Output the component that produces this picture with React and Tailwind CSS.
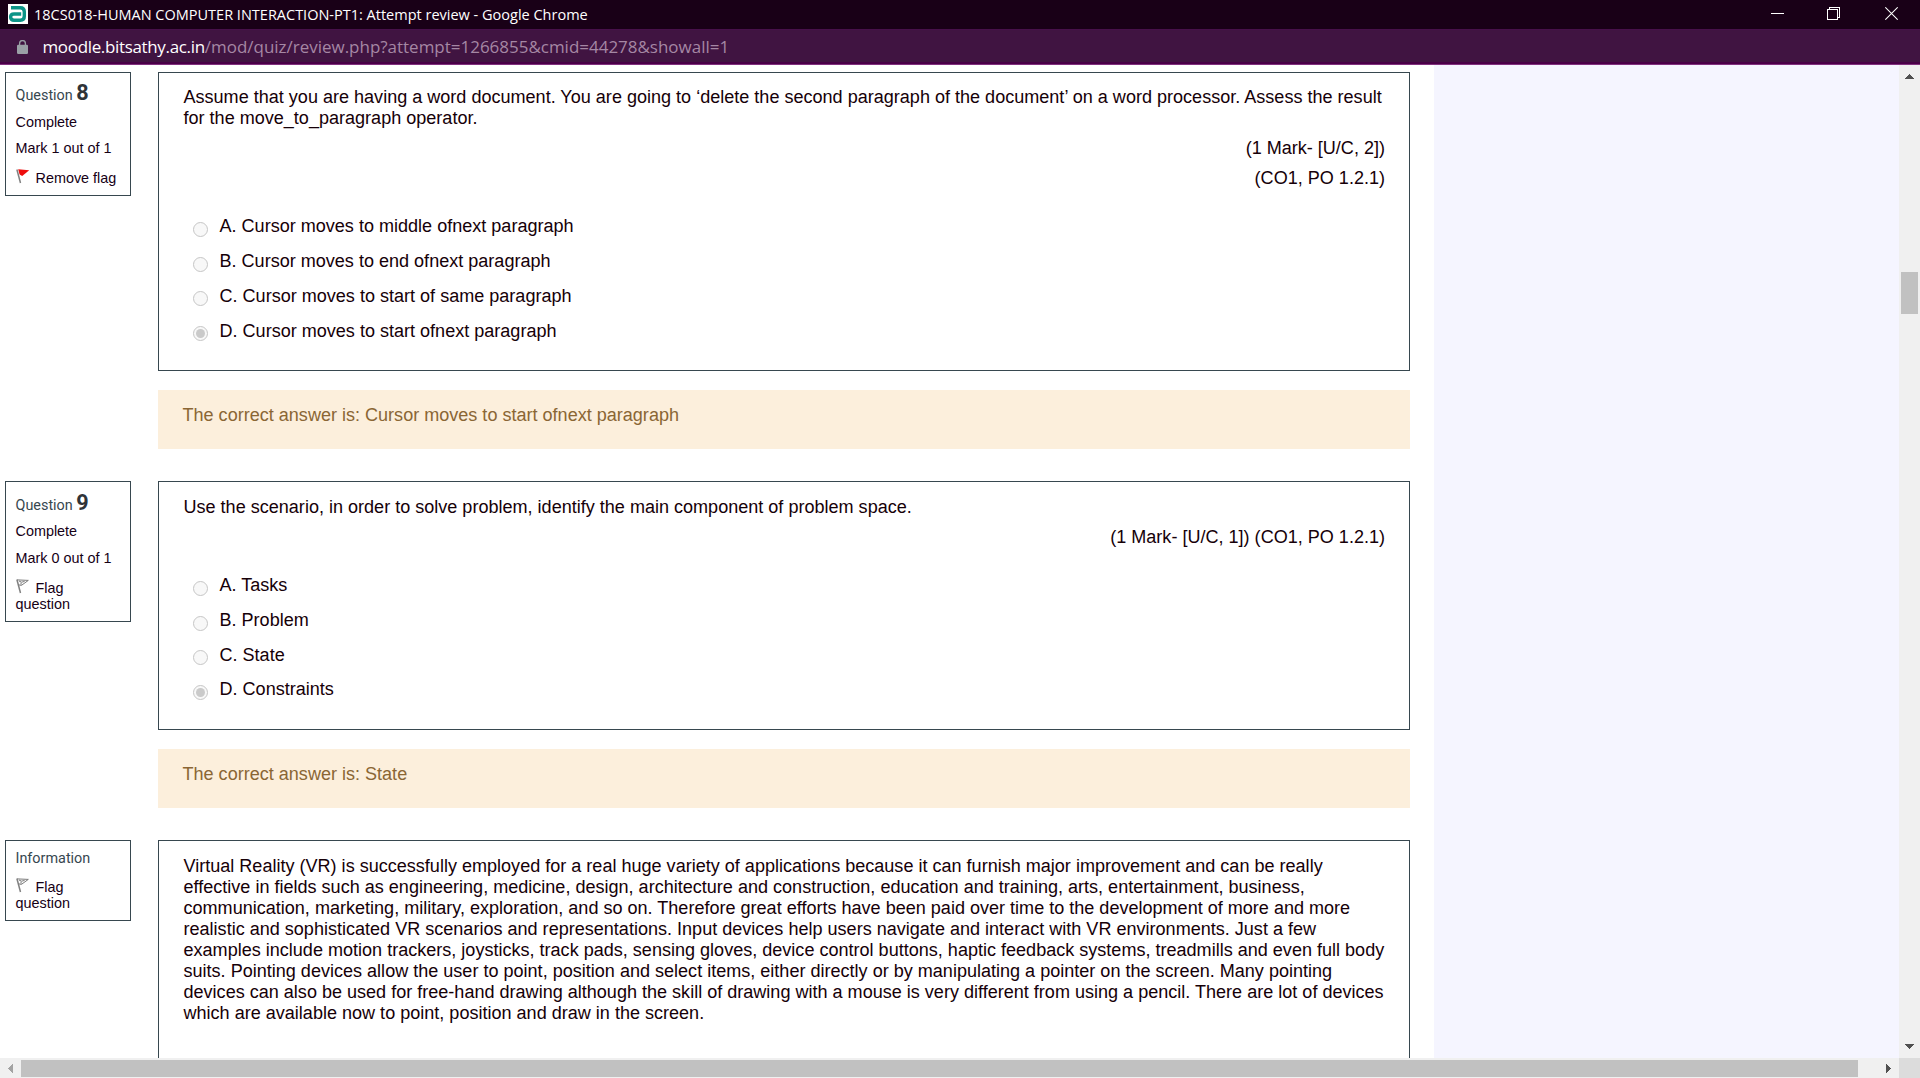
import React from "react";

function Titlebar() {
  return (
    <div className="flex h-[29px] items-center bg-[#190017] pl-2 text-white">
      <svg width="20" height="20" viewBox="0 0 20 20" className="mt-[-1px] shrink-0">
        <rect width="20" height="20" fill="#fff" />
        <path
          d="M3 3.8H12.2Q16.3 3.8 16.3 7.8V12.2Q16.3 16.2 12.3 16.2H6Q2.6 16.2 2.6 13.1Q2.6 10 6 10H13.2"
          fill="none"
          stroke="#0c9488"
          strokeWidth="3.4"
        />
      </svg>
      <span className="ml-[6px] whitespace-pre font-['Open_Sans','Noto_Sans',sans-serif] text-[14.5px] leading-5">
        18CS018-HUMAN COMPUTER INTERACTION-PT1: Attempt review - Google Chrome
      </span>
      <div className="ml-auto flex h-full pr-[22px]">
        <svg width="13" height="29" viewBox="0 0 13 29" shapeRendering="crispEdges">
          <path d="M0 13.5H13" stroke="#fff" />
        </svg>
        <svg width="13" height="29" viewBox="0 0 13 29" className="ml-[43px]" fill="none" stroke="#fff" shapeRendering="crispEdges">
          <path d="M.5 9.5H10.5V19.5H.5ZM2.5 9V7.5H12.5V17.5H11" />
        </svg>
        <svg width="13" height="29" viewBox="0 0 13 29" className="ml-[45px]">
          <path d="M.3 7.3L12.7 19.7M12.7 7.3L.3 19.7" stroke="#fff" strokeWidth="1.2" />
        </svg>
      </div>
    </div>
  );
}

function AddressBar() {
  return (
    <div className="flex h-9 items-center border-b border-[#81307e] bg-[#401441] pl-[17px] shadow-[inset_0_1px_0_#47104a,inset_0_-2px_0_#490047]">
      <svg width="11" height="14" viewBox="0 0 11 14" className="shrink-0">
        <path d="M2.6 6V3.5A2.9 2.9 0 0 1 8.4 3.5V6" fill="none" stroke="#9aa0a6" strokeWidth="1.3" />
        <rect y="4.8" width="11" height="9.2" rx="1.2" fill="#9aa0a6" />
      </svg>
      <div className="ml-[14.5px] whitespace-pre font-['Open_Sans','Noto_Sans',sans-serif] leading-6">
        <span className="text-[16.97px] tracking-[-0.32px] text-white">moodle.bitsathy.ac.in</span>
        <span className="text-[16.98px] text-[#a587a4]">/mod/quiz/review.php?attempt=1266855&amp;cmid=44278&amp;showall=1</span>
      </div>
    </div>
  );
}

function Flag({ red }) {
  return (
    <svg width="14" height="15" viewBox="0 0 14 15" className="absolute top-[-1px] left-0">
      <path d="M.9 .5L4.5 14" stroke="#808080" strokeWidth="1.5" fill="none" />
      {red ? (
        <path d="M2.2 .2L13.2 1.2L6.2 7L3.6 5.4Z" fill="#ee0d0d" />
      ) : (
        <path d="M1.2 .9L12.3 1.4L5.4 6.4L2.6 5.8M3 2L5.6 3.2L8.6 2.4M5 3.6L5.1 5.8" fill="none" stroke="#7a7a7a" strokeWidth="1" />
      )}
    </svg>
  );
}

function InfoBox({ className, children }) {
  return (
    <div className={"w-[126px] shrink-0 self-start border border-[#37474f] pl-[9.5px] text-[14.4px] leading-4 text-[#160016] " + className}>
      {children}
    </div>
  );
}

function QuestionTitle({ number, className }) {
  return (
    <div className={"font-['Roboto',sans-serif] leading-[22px] text-[#37474f] " + className}>
      Question <b className="text-[21.6px] font-bold leading-[20px] text-[#2f3338]">{number}</b>
    </div>
  );
}

function FlagLink({ red, children }) {
  return (
    <div className="relative">
      <Flag red={red} />
      <span className="inline-block pl-5">{children}</span>
    </div>
  );
}

function Option({ text, checked, raised }) {
  return (
    <div className="flex h-[35px] items-start">
      <span
        className={
          "flex size-[15px] shrink-0 items-center justify-center rounded-full border border-[#c6c6c6] bg-[#f8f8f8] " +
          (raised ? "mt-[5px]" : "mt-[6px]")
        }
      >
        {checked && <span className="size-[9px] rounded-full bg-[#cacaca]" />}
      </span>
      <span className="ml-[11.5px]">{text}</span>
    </div>
  );
}

function Feedback({ children }) {
  return <div className="mt-[19px] h-[59px] bg-[#fcefdc] pt-[15px] pl-[24.5px] text-[#8a6634]">{children}</div>;
}

const virtualReality = [
  "Virtual Reality (VR) is successfully employed for a real huge variety of applications because it can furnish major improvement and can be really",
  "effective in fields such as engineering, medicine, design, architecture and construction, education and training, arts, entertainment, business,",
  "communication, marketing, military, exploration, and so on. Therefore great efforts have been paid over time to the development of more and more",
  "realistic and sophisticated VR scenarios and representations. Input devices help users navigate and interact with VR environments. Just a few",
  "examples include motion trackers, joysticks, track pads, sensing gloves, device control buttons, haptic feedback systems, treadmills and even full body",
  "suits. Pointing devices allow the user to point, position and select items, either directly or by manipulating a pointer on the screen. Many pointing",
  "devices can also be used for free-hand drawing although the skill of drawing with a mouse is very different from using a pencil. There are lot of devices",
  "which are available now to point, position and draw in the screen.",
];

function Content() {
  return (
    <main className="flex h-full w-[1434px] shrink-0 flex-col overflow-hidden bg-white pt-[7px] pl-[5px]">
      <section className="flex h-[409px] shrink-0">
        <InfoBox className="h-[124px] pt-[10px]">
          <QuestionTitle number="8" className="h-[31px]" />
          <div className="h-[26px]">Complete</div>
          <div className="h-[30px]">Mark 1 out of 1</div>
          <FlagLink red>Remove flag</FlagLink>
        </InfoBox>
        <div className="ml-[27px] w-[1252px]">
          <div className="h-[299px] border border-[#37474f] px-6 pt-[14px]">
            <p className="whitespace-pre pl-[0.5px]">
              Assume that you are having a word document. You are going to ‘delete the second paragraph of the document’ on a word processor. Assess the result
              <br />
              for the move_to_paragraph operator.
            </p>
            <p className="mt-[9px] text-right">(1 Mark- [U/C, 2])</p>
            <p className="mt-[9px] text-right">(CO1, PO 1.2.1)</p>
            <div className="mt-[27px] pl-[10px]">
              <Option text="A. Cursor moves to middle ofnext paragraph" />
              <Option text="B. Cursor moves to end ofnext paragraph" />
              <Option text="C. Cursor moves to start of same paragraph" raised />
              <Option text="D. Cursor moves to start ofnext paragraph" checked raised />
            </div>
          </div>
          <Feedback>The correct answer is: Cursor moves to start ofnext paragraph</Feedback>
        </div>
      </section>

      <section className="flex h-[359px] shrink-0">
        <InfoBox className="h-[141px] pt-[11px]">
          <QuestionTitle number="9" className="h-[30px]" />
          <div className="h-[27px]">Complete</div>
          <div className="h-[30px]">Mark 0 out of 1</div>
          <FlagLink>Flag</FlagLink>
          <div>question</div>
        </InfoBox>
        <div className="ml-[27px] w-[1252px]">
          <div className="h-[249px] border border-[#37474f] px-6 pt-[15px]">
            <p className="pl-[0.5px]">Use the scenario, in order to solve problem, identify the main component of problem space.</p>
            <p className="mt-[9px] text-right">(1 Mark- [U/C, 1]) (CO1, PO 1.2.1)</p>
            <div className="mt-[27px] pl-[10px]">
              <Option text="A. Tasks" />
              <Option text="B. Problem" />
              <Option text="C. State" raised />
              <div className="mt-[-1px]">
                <Option text="D. Constraints" checked />
              </div>
            </div>
          </div>
          <Feedback>The correct answer is: State</Feedback>
        </div>
      </section>

      <section className="flex h-[240px] shrink-0">
        <InfoBox className="h-[81px] pt-[10px]">
          <div className="h-[28px] font-['Roboto',sans-serif] text-[#37474f]">Information</div>
          <FlagLink>Flag</FlagLink>
          <div>question</div>
        </InfoBox>
        <div className="ml-[27px] w-[1252px] whitespace-pre border border-[#37474f] px-6 pt-[15px]">
          {virtualReality.map((line) => (
            <p key={line} className="pl-[0.5px]">{line}</p>
          ))}
        </div>
      </section>
    </main>
  );
}

function VerticalScrollbar() {
  return (
    <div className="flex w-[21px] shrink-0 flex-col items-center bg-[#f0f0f0]">
      <svg width="9" height="5" viewBox="0 0 9 5" className="mt-[9px]" shapeRendering="crispEdges">
        <path d="M0 5L4.5 0L9 5Z" fill="#505050" />
      </svg>
      <div className="mt-[193px] h-[42px] w-[17px] bg-[#c1c1c1]" />
      <svg width="9" height="5" viewBox="0 0 9 5" className="mt-auto mb-[9px]" shapeRendering="crispEdges">
        <path d="M0 0L4.5 5L9 0Z" fill="#505050" />
      </svg>
    </div>
  );
}

function HorizontalScrollbar() {
  return (
    <div className="flex h-5 shrink-0 bg-[#f0f0f0]">
      <svg width="21" height="20" viewBox="0 0 21 20" shapeRendering="crispEdges">
        <path d="M13 6L8 10.5L13 15Z" fill="#a3a3a3" />
      </svg>
      <div className="mt-[2px] h-[17px] w-[1837px] bg-[#c1c1c1]" />
      <svg width="41" height="20" viewBox="0 0 41 20" shapeRendering="crispEdges">
        <path d="M12 6L17 10.5L12 15Z" transform="translate(16)" fill="#505050" />
      </svg>
      <div className="ml-auto w-[21px] bg-[#dcdcdc]" />
    </div>
  );
}

export default function App() {
  return (
    <div className="flex h-[1078px] w-[1920px] flex-col overflow-hidden bg-white font-['Liberation_Sans',Arial,sans-serif] text-[18.052px] leading-[21px] text-[#160008]">
      <Titlebar />
      <AddressBar />
      <div className="flex min-h-0 flex-1">
        <Content />
        <aside className="flex-1 bg-[#f5f5ff]" />
        <VerticalScrollbar />
      </div>
      <HorizontalScrollbar />
    </div>
  );
}
